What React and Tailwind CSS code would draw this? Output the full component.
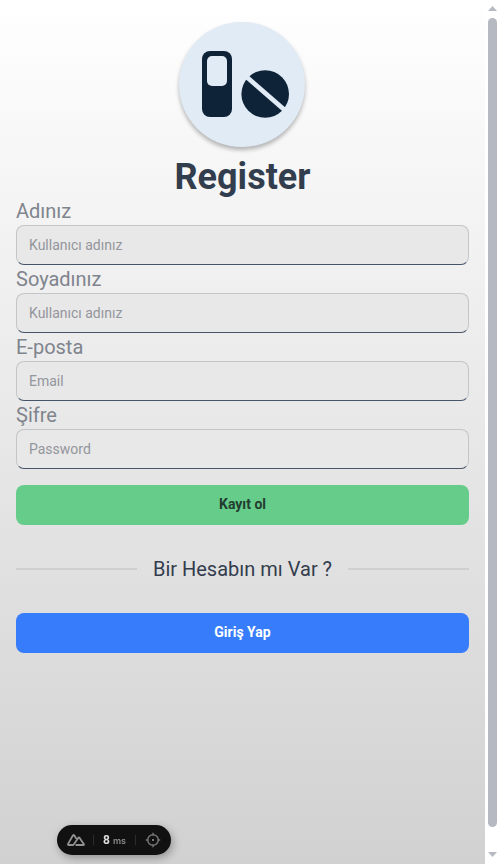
const fields = [
  { label: "Adınız", placeholder: "Kullanıcı adınız", type: "text" },
  { label: "Soyadınız", placeholder: "Kullanıcı adınız", type: "text" },
  { label: "E-posta", placeholder: "Email", type: "email" },
  { label: "Şifre", placeholder: "Password", type: "password" },
];

function Logo() {
  return (
    <div className="mr-px h-[125px] w-[126px] shrink-0 rounded-full bg-[#e1ebf5] shadow-[0_3px_4px_rgba(0,0,0,0.28)]">
      <svg viewBox="0 0 126 125" className="h-full w-full">
        <rect x="23" y="29" width="30" height="66" rx="8" fill="#0e2338" />
        <rect x="28" y="34" width="20" height="30" rx="5" fill="#e1ebf5" />
        <circle cx="86.2" cy="72" r="23.8" fill="#0e2338" />
        <path d="M66 53.5 108.5 90.5" stroke="#e1ebf5" strokeWidth="4.8" />
      </svg>
    </div>
  );
}

function DevTools() {
  return (
    <div className="fixed top-[825px] left-[57px] flex h-[30px] w-[114px] items-center rounded-full bg-[#111] shadow-[2px_3px_8px_rgba(0,0,0,0.3)]">
      <svg viewBox="0 0 18 12" className="ml-[10px] h-3 w-[18px]" fill="none" stroke="#929292" strokeWidth="1.8" strokeLinejoin="round">
        <path d="M9.4 4.8 7.2 1.3Q6.6.6 6 1.3L1.1 9.9Q.7 11 1.8 11H5.6Q6.4 11 6.9 10.2L11.2 3.9Q11.9 3 12.6 3.9L16.8 9.9Q17.3 11 16.2 11H8.6" />
      </svg>
      <div className="ml-2 h-[10px] w-px bg-[#2c2c2c]" />
      <div className="ml-[9px] flex items-baseline gap-[3px]">
        <span className="text-xs leading-4 font-bold text-[#dedede]">8</span>
        <span className="w-[13px] font-['Inter',sans-serif] text-[9px] leading-4 font-semibold text-[#8c8c8c]">ms</span>
      </div>
      <div className="ml-[9px] h-[10px] w-px bg-[#2c2c2c]" />
      <svg viewBox="0 0 16 16" className="ml-[9px] h-4 w-4" fill="none" stroke="#737373" strokeWidth="1.5">
        <circle cx="8" cy="8" r="5.3" />
        <path d="M8 .8V3.5M8 12.5V15.2M.8 8H3.5M12.5 8H15.2" />
        <circle cx="8" cy="8" r="1" fill="#999" stroke="none" />
      </svg>
    </div>
  );
}

function Scrollbar() {
  return (
    <div className="flex h-full w-[15px] flex-col items-center bg-white">
      <svg viewBox="0 0 9 5" className="mt-[6px] h-[5px] w-[9px] shrink-0" fill="#b6b9c2">
        <path d="M0 5 4.5 0 9 5Z" />
      </svg>
      <div className="mt-[7px] h-[809px] w-[9px] shrink-0 rounded-full bg-[#b6b9c2]" />
      <svg viewBox="0 0 9 5" className="mt-[25px] h-[5px] w-[9px] shrink-0" fill="#b6b9c2">
        <path d="M0 0H9L4.5 5Z" />
      </svg>
    </div>
  );
}

export default function App() {
  return (
    <div className="flex h-[864px] w-[500px] overflow-hidden bg-white font-['Roboto',sans-serif]">
      <main className="flex w-[485px] flex-col items-center bg-linear-to-b from-white to-[#d1d1d1] px-4 pt-[22px]">
        <Logo />
        <h1 className="mt-[10px] text-4xl leading-10 font-bold text-[#323d4e]">Register</h1>
        <form className="flex w-full flex-col" onSubmit={(e) => e.preventDefault()}>
          {fields.map((field) => (
            <label key={field.label} className="flex flex-col">
              <span className="text-xl leading-7 text-[#7f848d]">{field.label}</span>
              <input
                type={field.type}
                placeholder={field.placeholder}
                className="h-10 w-full rounded-lg border border-[#c4c5c9] border-b-[#475569] bg-[#e8e8e8] px-3 text-sm placeholder:text-[#93969c]"
              />
            </label>
          ))}
          <button className="mt-4 h-10 rounded-lg bg-[#66cc8a] pb-[3px] text-sm leading-4 font-bold text-[#223d30]">Kayıt ol</button>
        </form>
        <div className="mt-[30px] flex h-7 w-full items-center gap-4">
          <div className="h-0.5 flex-1 bg-[#cecfd0]" />
          <span className="text-xl leading-7 text-[#333c4d]">Bir Hesabın mı Var ?</span>
          <div className="h-0.5 flex-1 bg-[#cecfd0]" />
        </div>
        <button className="mt-[30px] h-10 w-full rounded-lg bg-[#377cfb] pb-[3px] text-sm leading-4 font-bold text-white">Giriş Yap</button>
      </main>
      <Scrollbar />
      <DevTools />
    </div>
  );
}
